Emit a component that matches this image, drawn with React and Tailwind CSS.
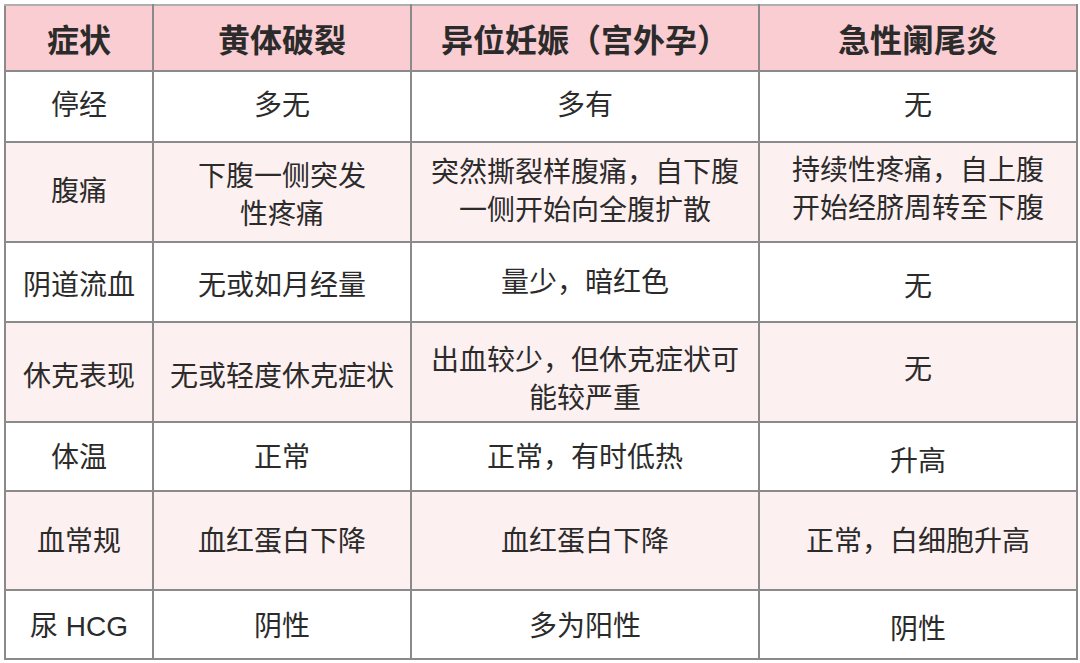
const header = ['症状', '黄体破裂', '异位妊娠（宫外孕）', '急性阑尾炎'];

const rows = [
  { h: 'h-[71px]', bg: 'bg-white', cells: ['停经', '多无', '多有', '无'], pad: ['pb-[2px]', 'pb-[2px]', 'pb-[2px]', 'pb-[2px]'] },
  { h: 'h-[100px]', bg: 'bg-[#fdf0f0]', cells: ['腹痛', '下腹一侧突发\n性疼痛', '突然撕裂样腹痛，自下腹\n一侧开始向全腹扩散', '持续性疼痛，自上腹\n开始经脐周转至下腹'], pad: ['', 'pt-[8px]', '', 'pb-[4px]'] },
  { h: 'h-[80px]', bg: 'bg-white', cells: ['阴道流血', '无或如月经量', '量少，暗红色', '无'], pad: ['pt-[8px]', 'pt-[8px]', 'pt-[2px]', 'pt-[10px]'] },
  { h: 'h-[100px]', bg: 'bg-[#fdf0f0]', cells: ['休克表现', '无或轻度休克症状', '出血较少，但休克症状可\n能较严重', '无'], pad: ['pt-[10px]', 'pt-[10px]', 'pt-[16px]', 'pb-[4px]'] },
  { h: 'h-[69px]', bg: 'bg-white', cells: ['体温', '正常', '正常，有时低热', '升高'], pad: ['pt-[2px]', 'pt-[2px]', 'pt-[2px]', 'pt-[10px]'] },
  { h: 'h-[99px]', bg: 'bg-[#fdf0f0]', cells: ['血常规', '血红蛋白下降', '血红蛋白下降', '正常，白细胞升高'], pad: ['pt-[2px]', 'pt-[2px]', 'pt-[2px]', 'pt-[2px]'] },
  { h: 'h-[69px]', bg: 'bg-white', cells: ['尿 HCG', '阴性', '多为阳性', '阴性'], pad: ['pt-[4px]', 'pt-[4px]', 'pt-[4px]', 'pt-[10px]'] },
];

const widths = ['w-[148px]', 'w-[258px]', 'w-[348px]', 'w-[318px]'];

export default function App() {
  return (
    <div className="w-[1080px] h-[663px] bg-white pt-[4px] pl-[4px] font-['Liberation_Sans','Noto_Sans_CJK_SC',sans-serif] text-[#2b2b2b]">
      <table className="border-collapse w-[1072px] table-fixed border-2 border-[#8a8a8a]">
        <thead>
          <tr className="h-[66px] bg-[#f9cdd1]">
            {header.map((t, i) => (
              <th key={i} className={`${widths[i]} border-2 border-[#8a8a8a] border-t-[#b0b0b0] text-[32px] font-bold text-center align-middle pt-[6px]`}>
                {t}
              </th>
            ))}
          </tr>
        </thead>
        <tbody>
          {rows.map((r, ri) => (
            <tr key={ri} className={`${r.h} ${r.bg}`}>
              {r.cells.map((c, ci) => (
                <td key={ci} className={`border-2 border-[#8a8a8a] text-center align-middle text-[28px] leading-[38px] whitespace-pre-line ${r.pad[ci]}`}>
                  {c}
                </td>
              ))}
            </tr>
          ))}
        </tbody>
      </table>
    </div>
  );
}
